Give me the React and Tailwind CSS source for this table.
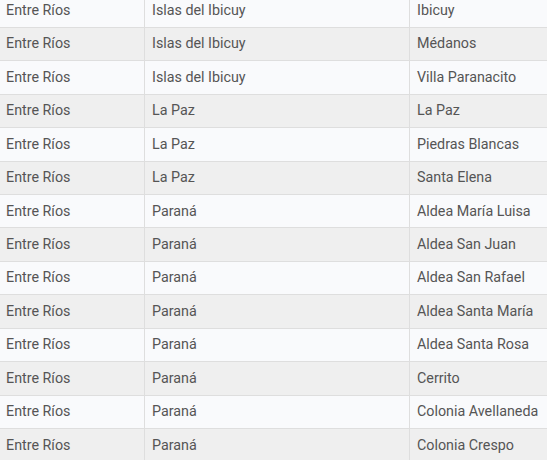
import React from 'react';

const rows = [
  ['Entre Ríos', 'Islas del Ibicuy', 'Ibicuy'],
  ['Entre Ríos', 'Islas del Ibicuy', 'Médanos'],
  ['Entre Ríos', 'Islas del Ibicuy', 'Villa Paranacito'],
  ['Entre Ríos', 'La Paz', 'La Paz'],
  ['Entre Ríos', 'La Paz', 'Piedras Blancas'],
  ['Entre Ríos', 'La Paz', 'Santa Elena'],
  ['Entre Ríos', 'Paraná', 'Aldea María Luisa'],
  ['Entre Ríos', 'Paraná', 'Aldea San Juan'],
  ['Entre Ríos', 'Paraná', 'Aldea San Rafael'],
  ['Entre Ríos', 'Paraná', 'Aldea Santa María'],
  ['Entre Ríos', 'Paraná', 'Aldea Santa Rosa'],
  ['Entre Ríos', 'Paraná', 'Cerrito'],
  ['Entre Ríos', 'Paraná', 'Colonia Avellaneda'],
  ['Entre Ríos', 'Paraná', 'Colonia Crespo'],
];

export default function App() {
  return (
    <div className="w-[547px] h-[460px] overflow-hidden bg-white font-['Roboto',sans-serif] text-[14.3px] text-[#555]">
      <div className="-mt-[5.6px]">
        {rows.map((r, i) => (
          <div
            key={i}
            className={`flex h-[33.45px] border-b border-[#dedede] ${i % 2 === 0 ? 'bg-[#f9fafc]' : 'bg-[#efefef]'}`}
          >
            <div className="w-[144px] pl-[6px] flex items-center">{r[0]}</div>
            <div className="w-[265px] pl-[7px] flex items-center border-l border-[#dedede]">{r[1]}</div>
            <div className="flex-1 pl-[7px] flex items-center border-l border-[#dedede]">{r[2]}</div>
          </div>
        ))}
      </div>
    </div>
  );
}
